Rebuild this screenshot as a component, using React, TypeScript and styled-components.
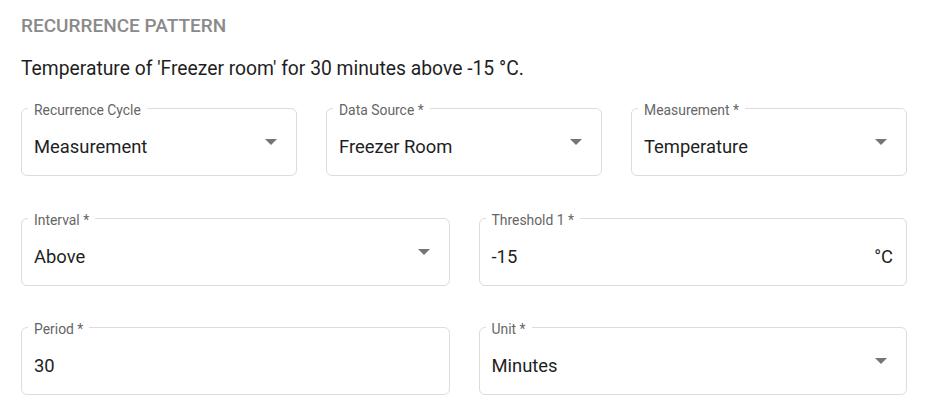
import React from "react";
import styled, { createGlobalStyle } from "styled-components";

const Global = createGlobalStyle`
  html, body { margin: 0; padding: 0; background: #ffffff; }
  body { font-family: Roboto, "Liberation Sans", Arial, sans-serif; }
`;

const Page = styled.div`
  padding: 14px 19px 0 21px;
  display: flex;
  flex-direction: column;
`;

const Heading = styled.h2`
  margin: 0;
  font-size: 19px;
  line-height: 24px;
  font-weight: 500;
  color: #8a8a8a;
  letter-spacing: 0;
`;

const Summary = styled.p`
  margin: 19px 0 0;
  font-size: 19.3px;
  line-height: 24px;
  color: #1f1f1f;
`;

const Row = styled.div<{ $cols: number; $top: number }>`
  display: grid;
  grid-template-columns: repeat(${(p) => p.$cols}, 1fr);
  column-gap: 29px;
  margin-top: ${(p) => p.$top}px;
`;

const Box = styled.div<{ $select?: boolean }>`
  position: relative;
  height: 68px;
  box-sizing: border-box;
  border: 1px solid #dcdcdc;
  border-radius: 6px;
  display: flex;
  align-items: center;
  padding: 0 ${(p) => (p.$select ? 19 : 13)}px 0 12px;
`;

const Label = styled.span`
  position: absolute;
  top: -8px;
  left: 6px;
  padding: 0 6px;
  background: #ffffff;
  font-size: 13.9px;
  line-height: 18px;
  color: #666666;
  white-space: nowrap;
`;

const Value = styled.span`
  flex: 1;
  margin-top: 10px;
  font-size: 18.4px;
  line-height: 24px;
  color: #1f1f1f;
  white-space: nowrap;
`;

const Adornment = styled.span`
  margin-top: 10px;
  font-size: 18.4px;
  line-height: 24px;
  color: #1f1f1f;
`;

const Arrow = styled.svg`
  width: 12px;
  height: 6px;
  flex: none;
  fill: #757575;
`;

type FieldProps = {
  label: string;
  value: string;
  select?: boolean;
  unit?: string;
};

const Field = ({ label, value, select, unit }: FieldProps) => (
  <Box $select={select}>
    <Label>{label}</Label>
    <Value>{value}</Value>
    {unit && <Adornment>{unit}</Adornment>}
    {select && (
      <Arrow viewBox="0 0 12 6">
        <path d="M0 0 L6 6 L12 0 Z" />
      </Arrow>
    )}
  </Box>
);

export default function App() {
  return (
    <>
      <Global />
      <Page>
        <Heading>RECURRENCE PATTERN</Heading>
        <Summary>Temperature of 'Freezer room' for 30 minutes above -15 °C.</Summary>
        <Row $cols={3} $top={27}>
          <Field label="Recurrence Cycle" value="Measurement" select />
          <Field label="Data Source *" value="Freezer Room" select />
          <Field label="Measurement *" value="Temperature" select />
        </Row>
        <Row $cols={2} $top={42}>
          <Field label="Interval *" value="Above" select />
          <Field label="Threshold 1 *" value="-15" unit="°C" />
        </Row>
        <Row $cols={2} $top={41}>
          <Field label="Period *" value="30" />
          <Field label="Unit *" value="Minutes" select />
        </Row>
      </Page>
    </>
  );
}
